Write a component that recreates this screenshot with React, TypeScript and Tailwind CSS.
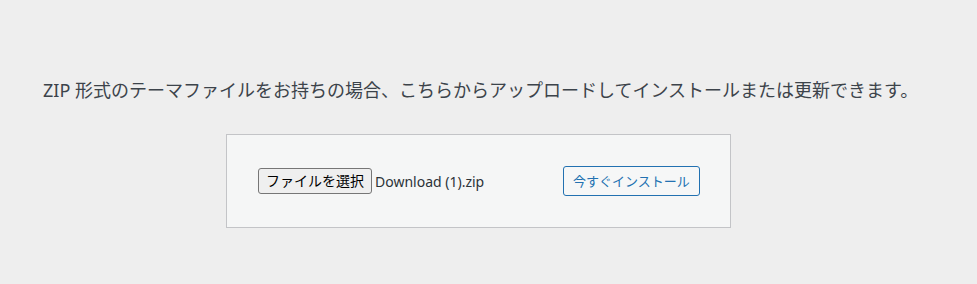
import React from "react";

const App = () => {
  return (
    <div
      className="min-h-[284px] w-full bg-[#eeeeee] text-[#3c434a]"
      style={{ fontFamily: '"Noto Sans", "Noto Sans CJK JP", sans-serif' }}
    >
      {/* Help text */}
      <p className="pl-[43px] pt-[77px] text-[18px] leading-[26px] text-[#3c434a]">
        ZIP 形式のテーマファイルをお持ちの場合、こちらからアップロードしてインストールまたは更新できます。
      </p>

      {/* Upload form */}
      <div className="mt-[31px] ml-[226px] w-[505px] border border-[#c3c4c7] bg-[#f5f6f6]">
        <div className="flex items-center py-[31px] pl-[31px]">
          <div className="flex w-[305px] items-center">
            <button className="h-[26px] rounded-[3px] border border-[#767676] bg-[#efefef] px-[7px] text-[14px] leading-none text-black">
              ファイルを選択
            </button>
            <span className="ml-[3px] text-[14px] text-[#2c3338]">Download (1).zip</span>
          </div>
          <button className="h-[30px] rounded-[3px] border border-[#2271b1] bg-[#f6f7f7] px-[9px] text-[13px] leading-none text-[#2271b1]">
            今すぐインストール
          </button>
        </div>
      </div>
    </div>
  );
};

export default App;
